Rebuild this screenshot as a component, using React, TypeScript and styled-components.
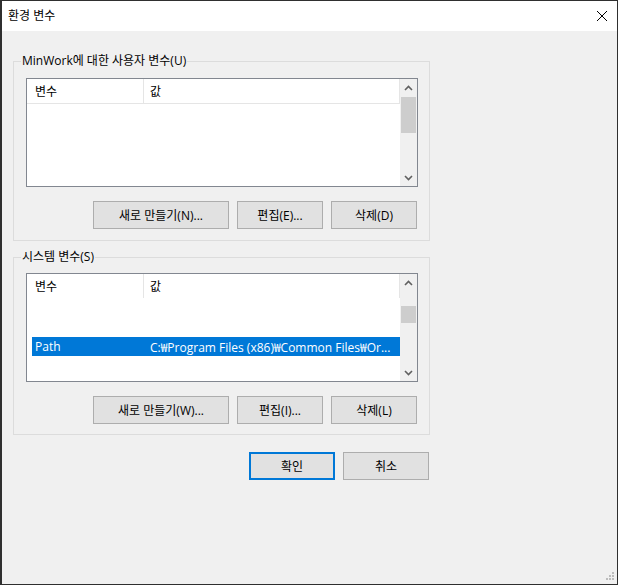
import styled, { createGlobalStyle } from "styled-components";

const GlobalStyle = createGlobalStyle`
  html, body {
    margin: 0;
    padding: 0;
    background: #f0f0f0;
  }
  * {
    box-sizing: border-box;
  }
`;

const FONT = `"Open Sans", "Noto Sans CJK KR", sans-serif`;

export default function App() {
  return (
    <>
      <GlobalStyle />
      <Window>
        <TitleBar>
          <Title>환경 변수</Title>
          <CloseIcon width="12" height="12" viewBox="0 0 12 12">
            <path d="M1 1 L11 11 M11 1 L1 11" stroke="#000" strokeWidth="1" />
          </CloseIcon>
        </TitleBar>

        <Body>
          {/** USER VARIABLES */}
          <Group $top={16} $bottom={11}>
            <Legend>MinWork에 대한 사용자 변수(U)</Legend>
            <ListBox>
              <ListContent>
                <Header $line>
                  <HeaderCell $first>변수</HeaderCell>
                  <HeaderCell>값</HeaderCell>
                </Header>
              </ListContent>
              <ScrollBar thumbTop={18} thumbHeight={36} />
            </ListBox>
            <ButtonRow>
              <Button $wide>새로 만들기(N)...</Button>
              <Button>편집(E)...</Button>
              <Button>삭제(D)</Button>
            </ButtonRow>
          </Group>

          {/** SYSTEM VARIABLES */}
          <Group $top={15} $bottom={10} $gap>
            <Legend>시스템 변수(S)</Legend>
            <ListBox>
              <ListContent>
                <Header>
                  <HeaderCell $first>변수</HeaderCell>
                  <HeaderCell>값</HeaderCell>
                </Header>
                <Row />
                <Row />
                <Row $selected>
                  <RowCell $first>Path</RowCell>
                  <RowCell>C:₩Program Files (x86)₩Common Files₩Or...</RowCell>
                </Row>
              </ListContent>
              <ScrollBar thumbTop={32} thumbHeight={17} />
            </ListBox>
            <ButtonRow>
              <Button $wide>새로 만들기(W)...</Button>
              <Button>편집(I)...</Button>
              <Button>삭제(L)</Button>
            </ButtonRow>
          </Group>

          <DialogButtons>
            <Button $primary>확인</Button>
            <Button>취소</Button>
          </DialogButtons>
        </Body>

        <Grip width="10" height="10" viewBox="0 0 10 10">
          <rect x="7" y="0" width="2" height="2" fill="#bcbcbc" />
          <rect x="4" y="3" width="2" height="2" fill="#bcbcbc" />
          <rect x="7" y="3" width="2" height="2" fill="#bcbcbc" />
          <rect x="1" y="6" width="2" height="2" fill="#bcbcbc" />
          <rect x="4" y="6" width="2" height="2" fill="#bcbcbc" />
          <rect x="7" y="6" width="2" height="2" fill="#bcbcbc" />
        </Grip>
      </Window>
    </>
  );
}

function ScrollBar({ thumbTop, thumbHeight }: { thumbTop: number; thumbHeight: number }) {
  return (
    <Track>
      <ArrowBox>
        <svg width="9" height="6" viewBox="0 0 9 6">
          <polyline points="1,5 4.5,1.5 8,5" fill="none" stroke="#606060" strokeWidth="1.6" />
        </svg>
      </ArrowBox>
      <Thumb style={{ top: thumbTop, height: thumbHeight }} />
      <ArrowBox $bottom>
        <svg width="9" height="6" viewBox="0 0 9 6">
          <polyline points="1,1 4.5,4.5 8,1" fill="none" stroke="#606060" strokeWidth="1.6" />
        </svg>
      </ArrowBox>
    </Track>
  );
}

/**
 * Styles
 */

const Window = styled.div`
  position: relative;
  width: 618px;
  height: 585px;
  background: #f0f0f0;
  border: 1px solid #2f2f2f;
  border-left-width: 2px;
  display: flex;
  flex-direction: column;
  font-family: ${FONT};
  font-size: 12px;
  color: #000;
`;

const TitleBar = styled.div`
  height: 30px;
  background: #fff;
  display: flex;
  align-items: center;
  justify-content: space-between;
  padding: 0 9px 0 6px;
`;

const Title = styled.span`
  font-size: 12px;
  line-height: 16px;
`;

const CloseIcon = styled.svg`
  display: block;
`;

const Body = styled.div`
  flex: 1;
  padding: 30px 0 0 11px;
  display: flex;
  flex-direction: column;
`;

const Group = styled.div<{ $top: number; $bottom: number; $gap?: boolean }>`
  position: relative;
  width: 417px;
  border: 1px solid #dcdcdc;
  margin-top: ${(p) => (p.$gap ? "16px" : "0")};
  padding: ${(p) => `${p.$top}px 11px ${p.$bottom}px 12px`};
  display: flex;
  flex-direction: column;
  gap: 14px;
`;

const Legend = styled.span`
  position: absolute;
  top: -9px;
  left: 7px;
  padding: 0 1px;
  background: #f0f0f0;
  line-height: 16px;
  white-space: nowrap;
`;

const ListBox = styled.div`
  width: 392px;
  height: 109px;
  border: 1px solid #828790;
  background: #fff;
  display: flex;
  overflow: hidden;
`;

const ListContent = styled.div`
  flex: 1;
  min-width: 0;
  display: flex;
  flex-direction: column;
`;

const Header = styled.div<{ $line?: boolean }>`
  height: 25px;
  display: flex;
  flex-shrink: 0;
  border-bottom: 1px solid ${(p) => (p.$line ? "#e5e5e5" : "transparent")};
`;

const HeaderCell = styled.div<{ $first?: boolean }>`
  height: 24px;
  display: flex;
  align-items: center;
  width: ${(p) => (p.$first ? "117px" : "auto")};
  flex: ${(p) => (p.$first ? "none" : "1")};
  padding-left: ${(p) => (p.$first ? "8px" : "6px")};
  border-right: 1px solid #e5e5e5;
`;

const Row = styled.div<{ $selected?: boolean }>`
  height: 19px;
  flex-shrink: 0;
  margin-left: 5px;
  display: flex;
  align-items: center;
  background: ${(p) => (p.$selected ? "#0078d7" : "transparent")};
  color: ${(p) => (p.$selected ? "#fff" : "#000")};
`;

const RowCell = styled.div<{ $first?: boolean }>`
  width: ${(p) => (p.$first ? "111px" : "auto")};
  flex: ${(p) => (p.$first ? "none" : "1")};
  min-width: 0;
  padding-left: ${(p) => (p.$first ? "3px" : "7px")};
  white-space: nowrap;
  overflow: hidden;
`;

const Track = styled.div`
  position: relative;
  width: 17px;
  height: 100%;
  background: #f0f0f0;
  flex-shrink: 0;
`;

const ArrowBox = styled.div<{ $bottom?: boolean }>`
  position: absolute;
  left: 0;
  ${(p) => (p.$bottom ? "bottom: 0;" : "top: 0;")}
  width: 17px;
  height: 17px;
  display: flex;
  align-items: center;
  justify-content: center;

  svg {
    display: block;
  }
`;

const Thumb = styled.div`
  position: absolute;
  left: 1px;
  width: 15px;
  background: #cdcdcd;
`;

const ButtonRow = styled.div`
  display: flex;
  justify-content: flex-end;
  gap: 8px;
  width: 392px;
  padding-right: 1px;
`;

const Button = styled.button<{ $wide?: boolean; $primary?: boolean }>`
  width: ${(p) => (p.$wide ? "136px" : "86px")};
  height: 28px;
  padding: 0;
  background: #e1e1e1;
  border: ${(p) => (p.$primary ? "2px solid #0078d7" : "1px solid #adadad")};
  font-family: ${FONT};
  font-size: 12px;
  color: #000;
`;

const DialogButtons = styled.div`
  width: 417px;
  margin-top: 17px;
  display: flex;
  justify-content: flex-end;
  gap: 8px;
  padding-right: 1px;
`;

const Grip = styled.svg`
  position: absolute;
  right: 2px;
  bottom: 2px;
`;
